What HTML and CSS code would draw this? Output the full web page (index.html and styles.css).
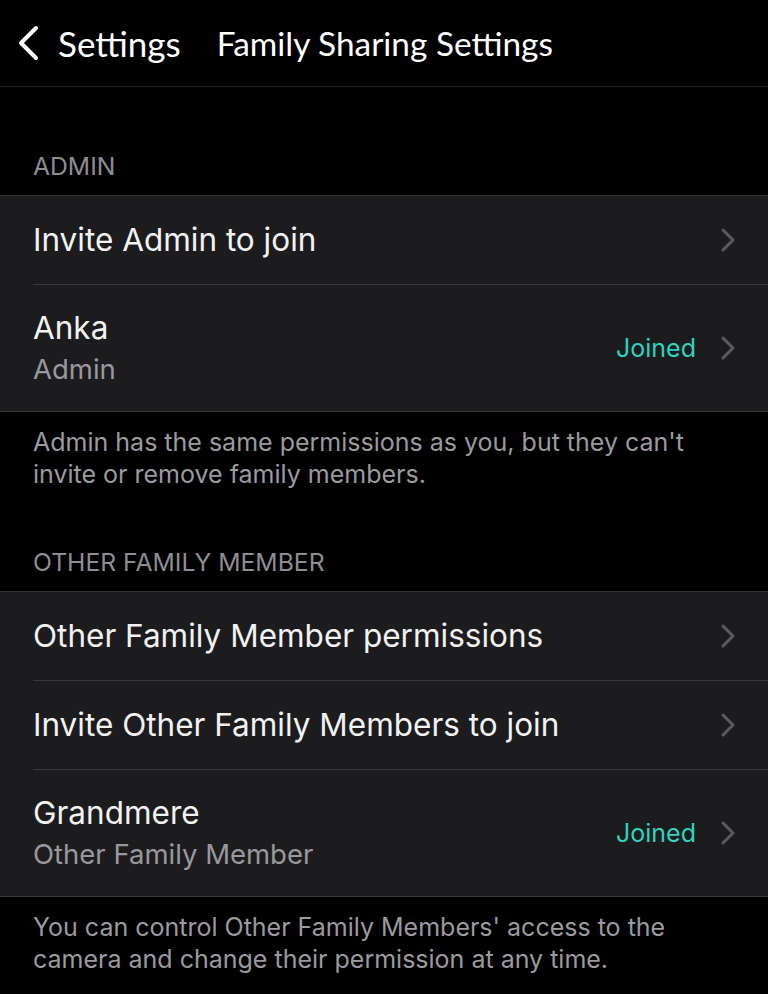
FILE: index.html
```html
<!DOCTYPE html>
<html>
<head>
    <title>Family Sharing Settings</title>
    <link rel="stylesheet" href="styles.css">
</head>
<body>
    <div class="nav-bar">
        <a class="back-link" href="#">
            <svg class="back-icon" width="24" height="36" viewBox="0 0 24 36">
                <path d="M20 3 L5 18 L20 33" fill="none" stroke="#fff" stroke-width="4" stroke-linecap="round" stroke-linejoin="round"/>
            </svg>
            <span>Settings</span>
        </a>
        <span class="nav-title">Family Sharing Settings</span>
    </div>

    <div class="section-header first">ADMIN</div>
    <div class="group">
        <div class="row">
            <div class="row-text"><div class="row-title">Invite Admin to join</div></div>
            <svg class="chevron" width="16" height="26" viewBox="0 0 16 26"><path d="M3 3 L13 13 L3 23" fill="none" stroke="#5b5b5f" stroke-width="3" stroke-linecap="round" stroke-linejoin="round"/></svg>
        </div>
        <div class="row tall">
            <div class="row-text">
                <div class="row-title">Anka</div>
                <div class="row-sub">Admin</div>
            </div>
            <span class="status">Joined</span>
            <svg class="chevron" width="16" height="26" viewBox="0 0 16 26"><path d="M3 3 L13 13 L3 23" fill="none" stroke="#5b5b5f" stroke-width="3" stroke-linecap="round" stroke-linejoin="round"/></svg>
        </div>
    </div>
    <div class="section-footer">Admin has the same permissions as you, but they can't<br>invite or remove family members.</div>

    <div class="section-header">OTHER FAMILY MEMBER</div>
    <div class="group">
        <div class="row">
            <div class="row-text"><div class="row-title">Other Family Member permissions</div></div>
            <svg class="chevron" width="16" height="26" viewBox="0 0 16 26"><path d="M3 3 L13 13 L3 23" fill="none" stroke="#5b5b5f" stroke-width="3" stroke-linecap="round" stroke-linejoin="round"/></svg>
        </div>
        <div class="row">
            <div class="row-text"><div class="row-title">Invite Other Family Members to join</div></div>
            <svg class="chevron" width="16" height="26" viewBox="0 0 16 26"><path d="M3 3 L13 13 L3 23" fill="none" stroke="#5b5b5f" stroke-width="3" stroke-linecap="round" stroke-linejoin="round"/></svg>
        </div>
        <div class="row tall">
            <div class="row-text">
                <div class="row-title">Grandmere</div>
                <div class="row-sub">Other Family Member</div>
            </div>
            <span class="status">Joined</span>
            <svg class="chevron" width="16" height="26" viewBox="0 0 16 26"><path d="M3 3 L13 13 L3 23" fill="none" stroke="#5b5b5f" stroke-width="3" stroke-linecap="round" stroke-linejoin="round"/></svg>
        </div>
    </div>
    <div class="section-footer">You can control Other Family Members' access to the<br>camera and change their permission at any time.</div>
</body>
</html>
```

FILE: styles.css
```css
body {
    margin: 0;
    background-color: #000;
    color: #f2f2f2;
    font-family: Inter, "Liberation Sans", sans-serif;
    height: 994px;
    overflow: hidden;
}

.nav-bar {
    display: flex;
    align-items: center;
    height: 86px;
    border-bottom: 1px solid #242426;
    font-family: Lato, "Liberation Sans", sans-serif;
    font-size: 35px;
    color: #fff;
}
.back-link {
    display: flex;
    align-items: center;
    color: #fff;
    text-decoration: none;
    padding-left: 16px;
}
.back-icon {
    margin-right: 18px;
}
.nav-title {
    margin-left: 36px;
    font-size: 33.4px;
}

.section-header {
    padding: 0 33px;
    margin-top: 58px;
    height: 43px;
    line-height: 28px;
    font-size: 24.7px;
    color: #8d8d92;
    border-bottom: 1px solid #333336;
}
.section-header.first {
    margin-top: 65px;
}

.group {
    background-color: #1c1c1e;
    padding-left: 33px;
    border-bottom: 1px solid #38383a;
}
.row {
    display: flex;
    align-items: center;
    height: 88px;
    padding-right: 32px;
    border-bottom: 1px solid #38383a;
}
.row:last-child {
    border-bottom: none;
}
.row.tall {
    height: 126px;
}
.row-text {
    flex: 1;
}
.row-title {
    font-size: 31.5px;
    line-height: 42px;
}
.row-sub {
    font-size: 27.5px;
    line-height: 40px;
    color: #98989d;
}
.status {
    font-size: 25px;
    color: #2fd3bd;
    margin-right: 24px;
}
.chevron {
    display: block;
}

.section-footer {
    padding: 14px 33px 0;
    font-size: 25px;
    line-height: 32px;
    color: #9a9a9f;
}
```
